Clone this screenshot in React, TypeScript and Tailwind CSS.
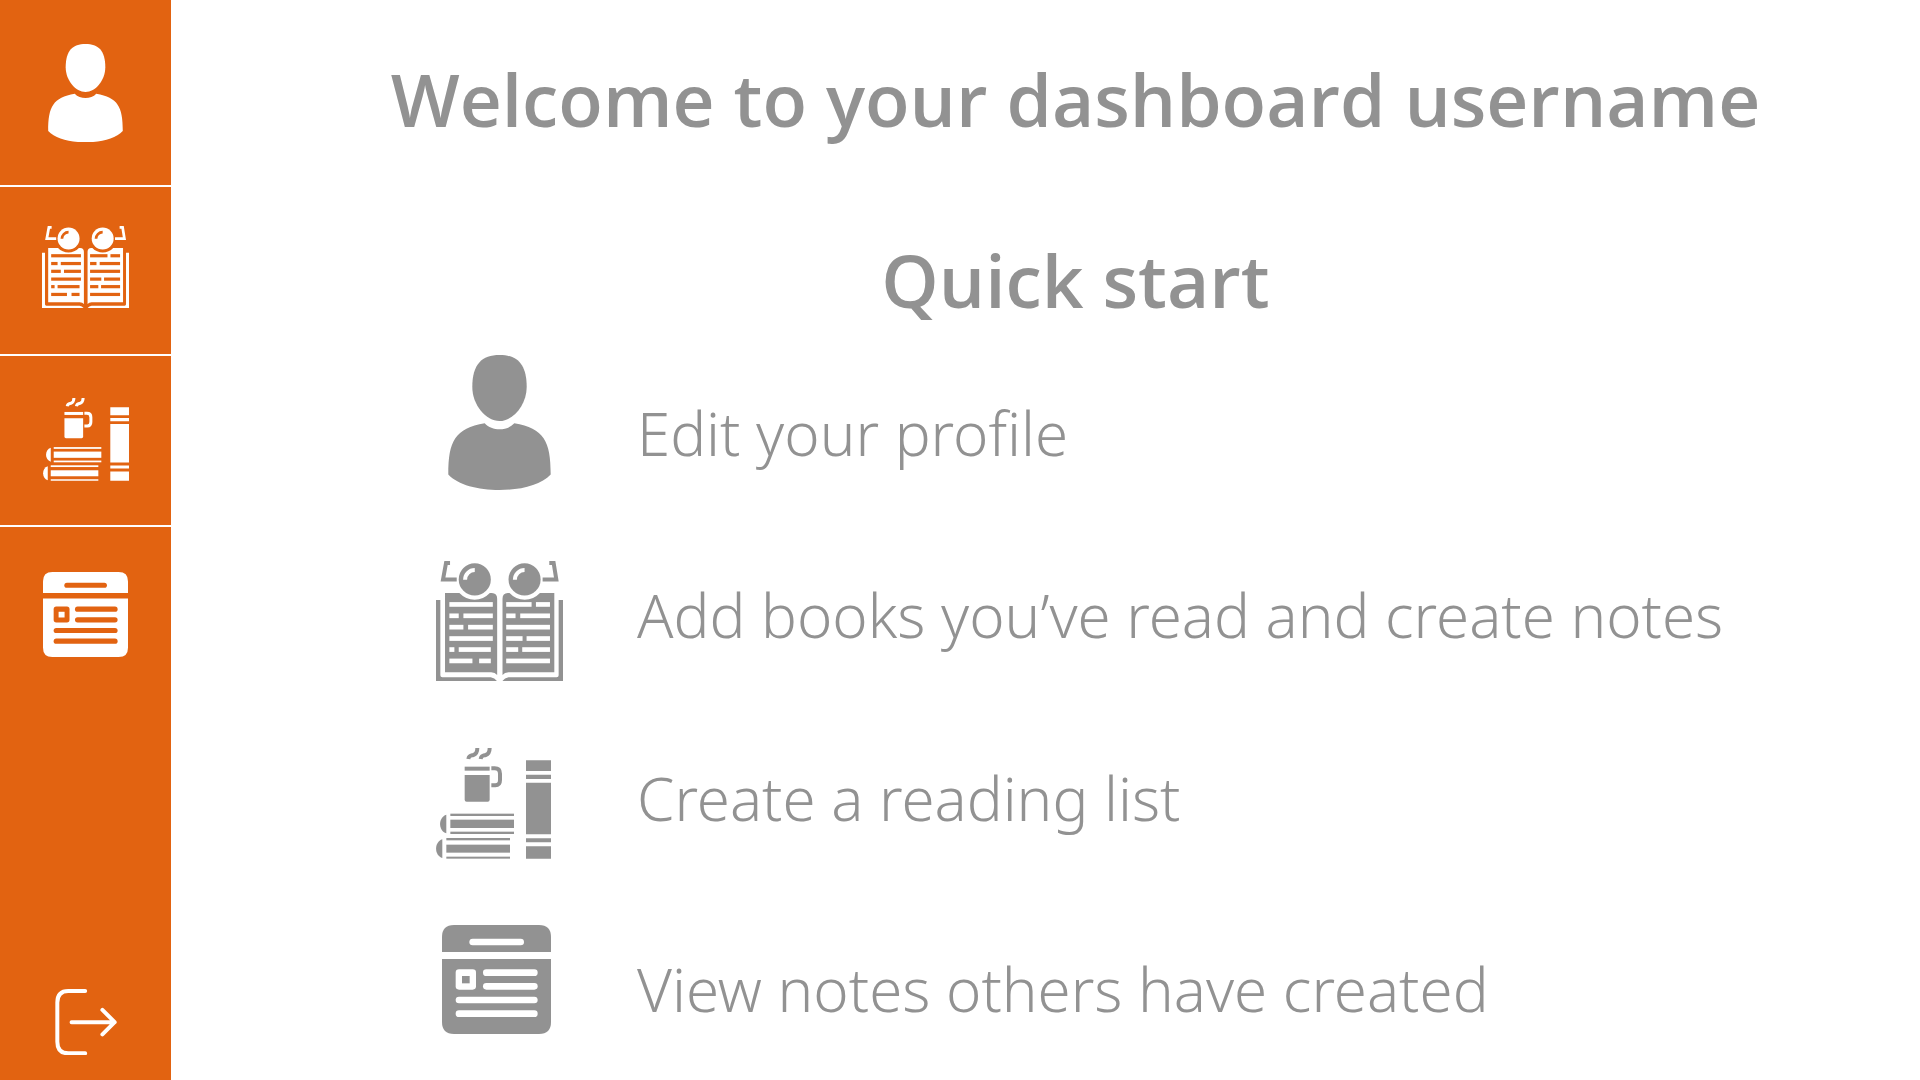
import type { ReactElement } from "react";

type IconProps = { className: string; cut: string };

function UserIcon({ className }: IconProps) {
  return (
    <svg viewBox="0 0 103 135" className={className} fill="currentColor" aria-hidden="true">
      <path d="M51.5 0C69 0 78.7 9 78.7 32C78.7 50 65 66 51.5 66C38 66 24.3 50 24.3 32C24.3 9 34 0 51.5 0Z" />
      <path d="M36.7 68.3C44 76.3 59 76.3 66.3 68.3C96 73.5 102.7 86 102.7 119.5C93 130 73 135 51.5 135C30 135 10 130 .3 119.5C.3 86 7 73.5 36.7 68.3Z" />
    </svg>
  );
}

const bookLines: [number, number, number][] = [
  [88, 186, 130],
  [88, 220, 28], [130, 220, 88],
  [88, 254, 42], [144, 254, 74],
  [88, 288, 130],
  [88, 321, 15], [116, 321, 96],
  [88, 355, 69], [177, 355, 35],
  [258, 186, 76], [347, 186, 42],
  [258, 220, 28], [300, 220, 89],
  [258, 254, 131],
  [258, 288, 49], [319, 288, 70],
  [258, 321, 36], [306, 321, 83],
  [258, 355, 131],
];

function BookIcon({ className, cut }: IconProps) {
  return (
    <svg viewBox="48 63 380 360" className={className} fill="currentColor" aria-hidden="true">
      <path d="M90 69H78L69 118H110M387 69H400L408 118H367" fill="none" stroke="currentColor" strokeWidth="12" />
      <circle cx="164" cy="118" r="48" />
      <circle cx="313" cy="118" r="48" />
      <path d="M135 119A29 29 0 0 1 164 90M284 119A29 29 0 0 1 313 90" fill="none" stroke={cut} strokeWidth="12" />
      <path d="M75 159H118A62 62 0 0 0 209 159H215Q231 160 231 176V404Q225 396 213 396H75Z" />
      <path d="M402 159H359A62 62 0 0 1 268 159H263Q247 160 247 176V404Q253 396 265 396H402Z" />
      <path d="M48 180H61V405Q61 411 67 411H212Q224 413 231 423H48Z" />
      <path d="M428 180H415V405Q415 411 409 411H265Q253 413 246 423H428Z" />
      {bookLines.map(([x, y, w]) => (
        <rect key={`${x}-${y}`} x={x} y={y} width={w} height="14" fill={cut} />
      ))}
    </svg>
  );
}

function ReadingIcon({ className }: IconProps) {
  return (
    <svg viewBox="48 54 345 332" className={className} fill="currentColor" aria-hidden="true">
      <g fill="none" stroke="currentColor" strokeWidth="12">
        <path d="M145 87C147 76 152 77 160 75C169 72 172 67 172 54" />
        <path d="M182 87C184 76 189 77 197 75C206 72 209 67 209 54" />
        <path d="M214 115H224Q240 115 240 131V150Q240 166 226 166H214" />
      </g>
      <rect x="134" y="110" width="75" height="12" />
      <path d="M134 135H209V209Q209 215 203 215H140Q134 215 134 209Z" />
      <path d="M79 254V310C54 302 54 262 79 254Z" />
      <rect x="91" y="251" width="191" height="7" />
      <rect x="91" y="269" width="191" height="25" />
      <rect x="91" y="305" width="191" height="7" />
      <path d="M67 328V384C42 376 42 336 67 328Z" />
      <rect x="79" y="324" width="191" height="7" />
      <rect x="79" y="344" width="191" height="24" />
      <rect x="79" y="380" width="191" height="6" />
      <path d="M318 91H393V123H318ZM318 134H393V147H318ZM318 158H393V313H318ZM318 325H393V337H318ZM318 349H393V386H318Z" />
    </svg>
  );
}

function NotesIcon({ className, cut }: IconProps) {
  return (
    <svg viewBox="66 45 327 327" className={className} fill="currentColor" aria-hidden="true">
      <path d="M66 126V81Q66 45 102 45H357Q393 45 393 81V126Z" />
      <path d="M66 147H393V336Q393 372 357 372H102Q66 372 66 336Z" />
      <g fill={cut}>
        <rect x="148" y="86" width="164" height="20" rx="10" />
        <rect x="107" y="178" width="61" height="61" rx="10" />
        <rect x="189" y="178" width="164" height="20" rx="10" />
        <rect x="189" y="219" width="164" height="20" rx="10" />
        <rect x="107" y="260" width="246" height="20" rx="10" />
        <rect x="107" y="301" width="246" height="20" rx="10" />
      </g>
      <rect x="126" y="198" width="23" height="22" />
    </svg>
  );
}

function LogoutIcon({ className }: { className: string }) {
  return (
    <svg
      viewBox="165 86 187 200"
      className={className}
      fill="none"
      stroke="currentColor"
      strokeWidth="12"
      strokeLinecap="round"
      strokeLinejoin="round"
      aria-hidden="true"
    >
      <path d="M256 92H205Q172 92 172 127V245Q172 280 205 280H256" />
      <path d="M215 186H345M308 149L345 186L308 223" />
    </svg>
  );
}

type Item = {
  label: string;
  href: string;
  Icon: (p: IconProps) => ReactElement;
  nav: string;
  navIcon: string;
  row: string;
  rowIcon: string;
  text: string;
};

const items: Item[] = [
  {
    label: "Edit your profile",
    href: "#profile",
    Icon: UserIcon,
    nav: "h-[187px] pt-11 border-b-2",
    navIcon: "w-[75px]",
    row: "mb-[71px]",
    rowIcon: "w-[103px]",
    text: "pt-12",
  },
  {
    label: "Add books you’ve read and create notes",
    href: "#books",
    Icon: BookIcon,
    nav: "h-[169px] pt-[39px] border-b-2",
    navIcon: "w-[87px]",
    row: "mb-[67px]",
    rowIcon: "w-[127px]",
    text: "pt-6",
  },
  {
    label: "Create a reading list",
    href: "#reading-list",
    Icon: ReadingIcon,
    nav: "h-[171px] pt-[42px] border-b-2",
    navIcon: "w-[86px]",
    row: "mb-[66px]",
    rowIcon: "w-[115px] mr-3",
    text: "pt-5",
  },
  {
    label: "View notes others have created",
    href: "#notes",
    Icon: NotesIcon,
    nav: "pt-[45px]",
    navIcon: "w-[85px]",
    row: "",
    rowIcon: "w-[109px] mr-1.5",
    text: "pt-[34px]",
  },
];

export default function App() {
  return (
    <div className="flex min-h-screen bg-white font-['Open_Sans',sans-serif] text-[#929292]">
      <nav aria-label="Main" className="flex w-[171px] shrink-0 flex-col bg-[#e26311] text-white">
        {items.map(({ label, href, Icon, nav, navIcon }) => (
          <a key={href} href={href} aria-label={label} className={`flex items-start justify-center border-white ${nav}`}>
            <Icon className={navIcon} cut="#e26311" />
          </a>
        ))}
        <button type="button" aria-label="Log out" className="mt-auto flex cursor-pointer justify-center pb-[25px]">
          <LogoutIcon className="w-[62px]" />
        </button>
      </nav>
      <main className="flex-1 pl-[60px] pt-[59px]">
        <h1 className="text-center text-[73px] leading-[80px] font-semibold">Welcome to your dashboard username</h1>
        <h2 className="mt-[101px] text-center text-[73px] leading-[80px] font-semibold">Quick start</h2>
        <ul className="mt-[35px] pl-[205px] font-['Noto_Sans',sans-serif] text-[60px] leading-none font-light">
          {items.map(({ label, href, Icon, row, rowIcon, text }) => (
            <li key={href} className={row}>
              <a href={href} className="flex items-start gap-[74px]">
                <span className="flex w-[127px] shrink-0 justify-center">
                  <Icon className={`shrink-0 ${rowIcon}`} cut="#ffffff" />
                </span>
                <span className={text}>{label}</span>
              </a>
            </li>
          ))}
        </ul>
      </main>
    </div>
  );
}
